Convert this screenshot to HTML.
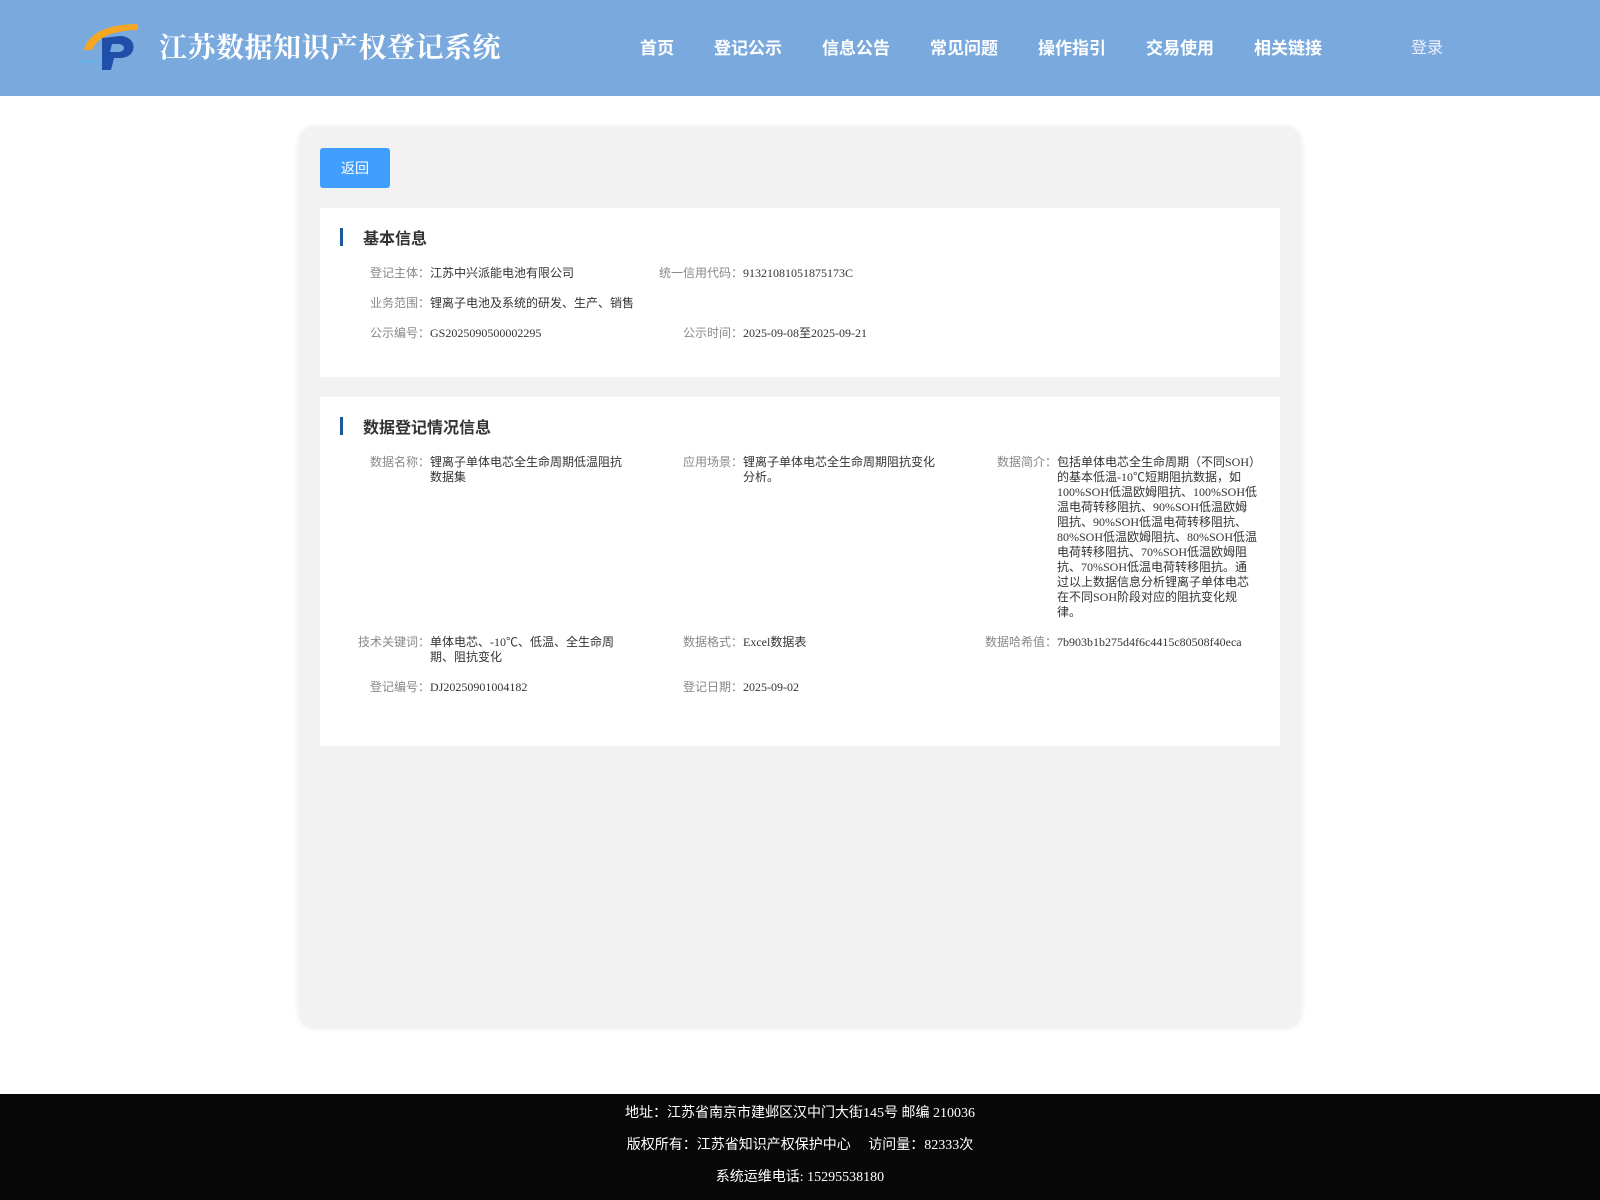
<!DOCTYPE html>
<html><head><meta charset="utf-8"><style>
*{margin:0;padding:0;box-sizing:border-box}
body{width:1600px;height:1200px;position:relative;background:#fff;font-family:"Liberation Serif","Noto Sans CJK SC",serif;overflow:hidden}
.hd{position:absolute;left:0;top:0;width:1600px;height:96px;background:#7aaadd}
.title{position:absolute;left:159px;top:26px;font-size:28px;font-weight:bold;color:#fff;font-family:"Liberation Serif","Noto Serif CJK SC",serif;letter-spacing:0.5px}
.nav{position:absolute;top:34px;font-size:17px;font-weight:bold;color:#fff;font-family:"Liberation Sans","Noto Sans CJK SC",sans-serif}
.card{position:absolute;left:299px;top:127px;width:1002px;height:901px;background:#f2f2f2;border-radius:16px;box-shadow:0 0 6px rgba(0,0,0,.1)}
.btn{position:absolute;left:320px;top:148px;width:70px;height:40px;background:#409eff;border-radius:3px;color:#fff;font-size:14px;line-height:40px;text-align:center;font-family:"Liberation Sans","Noto Sans CJK SC",sans-serif}
.sec{position:absolute;left:320px;width:960px;background:#fff}
.st{position:absolute;font-size:16px;font-weight:bold;color:#333;font-family:"Liberation Sans","Noto Sans CJK SC",sans-serif}
.bar{position:absolute;width:3px;height:18px;background:#1a5a9a}
.l{position:absolute;font-size:12px;color:#888;text-align:right;width:120px;line-height:15px}
.v{position:absolute;font-size:12px;color:#333;line-height:15px}
.ft{position:absolute;left:0;top:1094px;width:1600px;height:106px;background:#080808;color:#fff;font-size:14px;text-align:center}
.ft div{position:absolute;width:100%}
</style></head><body>
<div class="hd">
<svg style="position:absolute;left:80px;top:20px" width="60" height="52" viewBox="0 0 60 52">
<path d="M4 30 C8 12 30 4 58 4 L58 10 C36 10 18 16 12 30 Z" fill="#f5a623"/>
<path d="M22 18 L40 16 C58 16 58 38 40 38 L34 38 L31 50 L22 50 Z M32 24 L30 32 L38 32 C46 32 46 24 38 24 Z" fill="#1f4fa8"/>
<rect x="0" y="40" width="20" height="3" fill="#6ab0e8"/>
</svg>
<div class="title">江苏数据知识产权登记系统</div>
<div class="nav" style="left:640px">首页</div>
<div class="nav" style="left:714px">登记公示</div>
<div class="nav" style="left:822px">信息公告</div>
<div class="nav" style="left:930px">常见问题</div>
<div class="nav" style="left:1038px">操作指引</div>
<div class="nav" style="left:1146px">交易使用</div>
<div class="nav" style="left:1254px">相关链接</div>
<div class="nav" style="left:1411px;font-weight:normal;font-size:16px;color:#eef">登录</div>
</div>
<div class="card"></div>
<div class="btn">返回</div>
<div class="sec" style="top:208px;height:169px"></div>
<div class="bar" style="left:340px;top:228px"></div>
<div class="st" style="left:363px;top:225px">基本信息</div>
<div class="l" style="left:310px;top:266px">登记主体：</div><div class="v" style="left:430px;top:266px">江苏中兴派能电池有限公司</div>
<div class="l" style="left:623px;top:266px">统一信用代码：</div><div class="v" style="left:743px;top:266px">91321081051875173C</div>
<div class="l" style="left:310px;top:296px">业务范围：</div><div class="v" style="left:430px;top:296px">锂离子电池及系统的研发、生产、销售</div>
<div class="l" style="left:310px;top:326px">公示编号：</div><div class="v" style="left:430px;top:326px">GS2025090500002295</div>
<div class="l" style="left:623px;top:326px">公示时间：</div><div class="v" style="left:743px;top:326px">2025-09-08至2025-09-21</div>
<div class="sec" style="top:397px;height:349px"></div>
<div class="bar" style="left:340px;top:417px"></div>
<div class="st" style="left:363px;top:414px">数据登记情况信息</div>
<div class="l" style="left:310px;top:455px">数据名称：</div><div class="v" style="left:430px;top:455px;width:196px">锂离子单体电芯全生命周期低温阻抗数据集</div>
<div class="l" style="left:623px;top:455px">应用场景：</div><div class="v" style="left:743px;top:455px;width:196px">锂离子单体电芯全生命周期阻抗变化分析。</div>
<div class="l" style="left:937px;top:455px">数据简介：</div><div class="v" style="left:1057px;top:455px;width:200px">包括单体电芯全生命周期（不同SOH）的基本低温-10℃短期阻抗数据，如100%SOH低温欧姆阻抗、100%SOH低温电荷转移阻抗、90%SOH低温欧姆阻抗、90%SOH低温电荷转移阻抗、80%SOH低温欧姆阻抗、80%SOH低温电荷转移阻抗、70%SOH低温欧姆阻抗、70%SOH低温电荷转移阻抗。通过以上数据信息分析锂离子单体电芯在不同SOH阶段对应的阻抗变化规律。</div>
<div class="l" style="left:310px;top:635px">技术关键词：</div><div class="v" style="left:430px;top:635px;width:190px">单体电芯、-10℃、低温、全生命周期、阻抗变化</div>
<div class="l" style="left:623px;top:635px">数据格式：</div><div class="v" style="left:743px;top:635px">Excel数据表</div>
<div class="l" style="left:937px;top:635px">数据哈希值：</div><div class="v" style="left:1057px;top:635px">7b903b1b275d4f6c4415c80508f40eca</div>
<div class="l" style="left:310px;top:680px">登记编号：</div><div class="v" style="left:430px;top:680px">DJ20250901004182</div>
<div class="l" style="left:623px;top:680px">登记日期：</div><div class="v" style="left:743px;top:680px">2025-09-02</div>
<div class="ft">
<div style="top:8px">地址：江苏省南京市建邺区汉中门大街145号 邮编 210036</div>
<div style="top:40px">版权所有：江苏省知识产权保护中心&nbsp;&nbsp;&nbsp;&nbsp;&nbsp;访问量：82333次</div>
<div style="top:72px">系统运维电话: 15295538180</div>
</div>
</body></html>
